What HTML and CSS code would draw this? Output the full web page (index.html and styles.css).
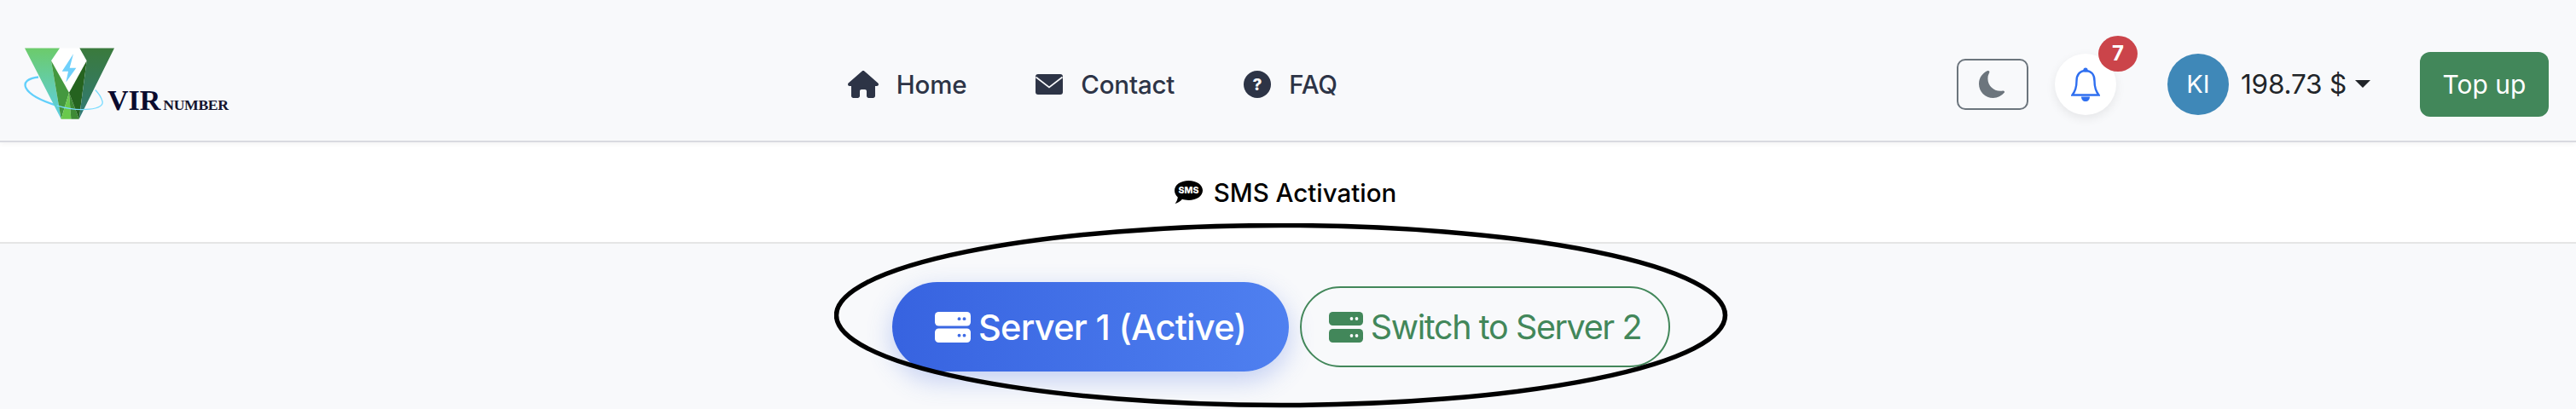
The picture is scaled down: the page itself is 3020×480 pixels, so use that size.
FILE: index.html
```html
<!DOCTYPE html>
<html lang="en">
<head>
  <meta charset="UTF-8">
  <meta name="viewport" content="width=device-width, initial-scale=1.0">
  <title>Vir Number - SMS Activation</title>
  <link rel="stylesheet" href="styles.css">
</head>
<body>

  <nav class="navbar">
    <a class="brand" href="#">
      <svg class="brand-logo" viewBox="84 74 321 260" width="107" height="87">
        <defs>
          <linearGradient id="leftArm" x1="0" y1="0" x2="0" y2="1">
            <stop offset="0" stop-color="#6ccb6b"/>
            <stop offset="1" stop-color="#5ccfe6"/>
          </linearGradient>
          <linearGradient id="rightArm" x1="0" y1="0" x2="0" y2="1">
            <stop offset="0" stop-color="#3a7a3c"/>
            <stop offset="1" stop-color="#317a78"/>
          </linearGradient>
        </defs>
        <polygon points="210,78 180,122 243,235 305,122 280,78" fill="#fff"/>
        <path d="M135 180 C60 188 72 240 200 280" fill="none" stroke="#62d0fb" stroke-width="7"/>
        <polygon points="87,78 210,78 180,122 215,328" fill="url(#leftArm)"/>
        <polygon points="180,122 243,235 215,328" fill="#44983f"/>
        <polygon points="243,235 215,328 250,328" fill="#69c94c"/>
        <polygon points="243,235 250,328 278,328" fill="#3e8a35"/>
        <polygon points="305,122 243,235 278,328" fill="#25631f"/>
        <polygon points="280,78 402,78 278,328 305,122" fill="url(#rightArm)"/>
        <polygon points="258,98 218,160 240,160 232,198 268,148 245,148" fill="#6fd0fb"/>
        <path d="M200 280 C280 305 370 295 360 265 C355 248 345 235 335 225" fill="none" stroke="#7adcff" stroke-width="4"/>
      </svg>
      <span class="brand-text">
        <span class="brand-vir">VIR</span>
        <span class="brand-number">NUMBER</span>
      </span>
    </a>

    <div class="nav-links">
      <a class="nav-link" href="#">
        <svg class="icon-home" viewBox="0 0 576 512" width="36" height="32"><path fill="#2d3446" d="M575.8 255.5c0 18-15 32.1-32 32.1h-32l.7 160.2c0 2.7-.2 5.4-.5 8.1V472c0 22.1-17.9 40-40 40H456c-1.1 0-2.2 0-3.3-.1c-1.4 .1-2.8 .1-4.2 .1H416 392c-22.1 0-40-17.9-40-40V448 384c0-17.7-14.3-32-32-32H256c-17.7 0-32 14.3-32 32v64 24c0 22.1-17.9 40-40 40H160 128.1c-1.5 0-3-.1-4.5-.2c-1.2 .1-2.4 .2-3.6 .2H104c-22.1 0-40-17.9-40-40V360c0-.9 0-1.9 .1-2.8V287.6H32c-18 0-32-14-32-32.1c0-9 3-17 10-24L266.4 8c7-7 15-8 22-8s15 2 21 7L564.8 231.5c8 7 12 15 11 24z"/></svg>
        Home
      </a>
      <a class="nav-link" href="#">
        <svg viewBox="0 0 32 24" width="32" height="24">
          <rect width="32" height="24" rx="3" fill="#2d3446"/>
          <path d="M0.5 3.5 L16 15.5 L31.5 3.5" fill="none" stroke="#f8f9fb" stroke-width="1.6"/>
        </svg>
        Contact
      </a>
      <a class="nav-link" href="#">
        <svg viewBox="0 0 32 32" width="32" height="32">
          <circle cx="16" cy="16" r="16" fill="#2d3446"/>
          <text class="faq-mark" x="16" y="22.5" text-anchor="middle">?</text>
        </svg>
        FAQ
      </a>
    </div>

    <div class="nav-right">
      <button class="theme-btn">
        <svg viewBox="0 0 16 16" width="32" height="32"><path fill="#6c757d" d="M6 .278a.768.768 0 0 1 .08.858 7.208 7.208 0 0 0-.878 3.46c0 4.021 3.278 7.277 7.318 7.277.527 0 1.04-.055 1.533-.16a.787.787 0 0 1 .81.316.733.733 0 0 1-.031.893A8.349 8.349 0 0 1 8.344 16C3.734 16 0 12.286 0 7.71 0 4.266 2.114 1.312 5.124.06A.752.752 0 0 1 6 .278z"/></svg>
      </button>
      <div class="bell">
        <svg viewBox="0 0 34 40" width="34" height="40">
          <circle cx="17" cy="3" r="2.6" fill="#2f6ff0"/>
          <path d="M17 4 C10 4 6.5 9 6.5 16 C6.5 23 5 28 1.5 32.5 H32.5 C29 28 27.5 23 27.5 16 C27.5 9 24 4 17 4 Z" fill="none" stroke="#2f6ff0" stroke-width="2.4"/>
          <path d="M12 34.5 H22 C22 38 20 40 17 40 C14 40 12 38 12 34.5 Z" fill="#2f6ff0"/>
        </svg>
        <span class="bell-badge">7</span>
      </div>
      <div class="account">
        <span class="avatar">KI</span>
        <span class="balance">198.73 $</span>
        <span class="caret"></span>
      </div>
      <button class="topup-btn">Top up</button>
    </div>
  </nav>

  <div class="page-title">
    <svg viewBox="0 0 33 27" width="33" height="27">
      <path d="M16.5 0 C26 0 33 5 33 11.5 C33 18 26 23 16.5 23 C13.5 23 11 22.5 9 21.8 C7 24 3.5 26.5 0.5 27 C2.5 25 3.5 21.5 3.8 19.5 C1.3 17.2 0 14.5 0 11.5 C0 5 7 0 16.5 0 Z" fill="#000"/>
      <text class="sms-mark" x="16.5" y="15.4" text-anchor="middle">SMS</text>
    </svg>
    SMS Activation
  </div>

  <div class="server-switch">
    <button class="server-btn server-active">
      <svg viewBox="0 0 42 36" width="42" height="36">
        <rect width="42" height="16.5" rx="4.5" fill="#fff"/>
        <rect y="19.5" width="42" height="16.5" rx="4.5" fill="#fff"/>
        <circle cx="28.5" cy="8.2" r="1.9" fill="#3f6ce6"/>
        <circle cx="34.5" cy="8.2" r="1.9" fill="#3f6ce6"/>
        <circle cx="28.5" cy="27.7" r="1.9" fill="#3f6ce6"/>
        <circle cx="34.5" cy="27.7" r="1.9" fill="#3f6ce6"/>
      </svg>
      Server 1 (Active)
    </button>
    <button class="server-btn server-other">
      <svg viewBox="0 0 40 36" width="40" height="36">
        <rect width="40" height="16" rx="4.5" fill="#42875a"/>
        <rect y="20" width="40" height="16" rx="4.5" fill="#42875a"/>
        <circle cx="26.5" cy="8" r="1.9" fill="#f8f9fb"/>
        <circle cx="32.5" cy="8" r="1.9" fill="#f8f9fb"/>
        <circle cx="26.5" cy="28" r="1.9" fill="#f8f9fb"/>
        <circle cx="32.5" cy="28" r="1.9" fill="#f8f9fb"/>
      </svg>
      Switch to Server 2
    </button>
  </div>

  <!-- marker circle drawn over the screenshot -->
  <svg class="annotation" viewBox="0 0 1050 218" width="1050" height="218">
    <ellipse cx="523.5" cy="108" rx="521" ry="105.5" fill="none" stroke="#000" stroke-width="5.5"/>
  </svg>

</body>
</html>
```

FILE: styles.css
```css
* {
  box-sizing: border-box;
}

html, body {
  margin: 0;
  padding: 0;
  height: 100%;
  overflow: hidden;
}

body {
  position: relative;
  font-family: Inter, "Noto Sans", sans-serif;
  background-color: #f8f9fb;
  color: #212529;
}

a {
  text-decoration: none;
  color: inherit;
}

button {
  font-family: inherit;
  cursor: pointer;
}

/* Navbar */
.navbar {
  display: flex;
  justify-content: space-between;
  align-items: center;
  height: 167px;
  padding: 32px 32px 0 28px;
  background-color: #f8f9fb;
  border-bottom: 2px solid #d9dae0;
  box-shadow: 0 2px 6px rgba(0, 0, 0, 0.05);
  position: relative;
}

.brand {
  display: flex;
  align-items: flex-start;
}

.brand-text {
  display: flex;
  align-items: baseline;
  gap: 3px;
  margin-top: 46px;
  margin-left: -9px;
  font-family: "Liberation Serif", serif;
  font-weight: bold;
  line-height: 34px;
}

.brand-vir {
  font-size: 34px;
  color: #0b0b2e;
}

.brand-number {
  font-size: 17.7px;
  letter-spacing: -0.4px;
  color: #14142e;
}

.nav-links {
  display: flex;
  align-items: center;
  gap: 81px;
}

.nav-link {
  display: flex;
  align-items: center;
  gap: 21px;
  font-size: 29.5px;
  font-weight: 500;
  letter-spacing: -0.2px;
  color: #2d3446;
}

.faq-mark {
  font-family: Inter, sans-serif;
  font-size: 19px;
  font-weight: 800;
  fill: #f8f9fb;
}

.nav-right {
  display: flex;
  align-items: center;
}

.theme-btn {
  display: flex;
  align-items: center;
  justify-content: center;
  width: 84px;
  height: 60px;
  padding: 0;
  background: transparent;
  border: 2px solid #6c757d;
  border-radius: 10px;
}

.bell {
  position: relative;
  display: flex;
  align-items: center;
  justify-content: center;
  width: 72px;
  height: 72px;
  margin-left: 31px;
  background-color: #fff;
  border-radius: 50%;
  box-shadow: 0 4px 12px rgba(0, 0, 0, 0.08);
}

.bell-badge {
  position: absolute;
  top: -21px;
  right: -25px;
  display: flex;
  align-items: center;
  justify-content: center;
  width: 46px;
  height: 42px;
  background-color: #cb444a;
  color: #fff;
  border-radius: 50%;
  font-size: 24px;
  font-weight: 700;
}

.account {
  display: flex;
  align-items: center;
  margin-left: 60px;
}

.avatar {
  display: flex;
  align-items: center;
  justify-content: center;
  width: 72px;
  height: 72px;
  background-color: #3f88b8;
  color: #fff;
  border-radius: 50%;
  font-size: 29px;
}

.balance {
  margin-left: 14px;
  font-size: 31.5px;
  letter-spacing: -0.2px;
}

.caret {
  width: 0;
  height: 0;
  margin-left: 10px;
  border-top: 9px solid #212529;
  border-left: 9px solid transparent;
  border-right: 9px solid transparent;
}

.topup-btn {
  width: 151px;
  height: 76px;
  margin-left: 58px;
  padding: 0;
  background-color: #42875a;
  color: #fff;
  border: none;
  border-radius: 12px;
  font-size: 30px;
}

/* Title row */
.page-title {
  display: flex;
  align-items: center;
  justify-content: center;
  gap: 13px;
  height: 119px;
  padding-right: 6px;
  background-color: #fff;
  border-bottom: 2px solid #e5e5e5;
  color: #000;
  font-size: 29.5px;
  font-weight: 500;
}

.sms-mark {
  font-family: Inter, sans-serif;
  font-size: 10.5px;
  font-weight: 800;
  fill: #fff;
}

/* Server switch */
.server-switch {
  display: flex;
  align-items: center;
  justify-content: center;
  gap: 13px;
  padding: 45px 16px 0 0;
}

.server-btn {
  display: flex;
  align-items: center;
  justify-content: center;
  gap: 9px;
  padding: 0;
  border-radius: 60px;
}

.server-active {
  width: 465px;
  height: 105px;
  border: none;
  color: #fff;
  background: linear-gradient(90deg, #3763e0, #4f80f0);
  box-shadow: 0 10px 30px rgba(65, 105, 225, 0.3);
  font-size: 41.5px;
  font-weight: 500;
  letter-spacing: -0.7px;
}

.server-other {
  width: 434px;
  height: 95px;
  background: transparent;
  border: 2px solid #42875a;
  color: #42875a;
  font-size: 39.5px;
  font-weight: 400;
  letter-spacing: -1.4px;
}

.annotation {
  position: absolute;
  top: 262px;
  left: 978px;
  pointer-events: none;
}
```
